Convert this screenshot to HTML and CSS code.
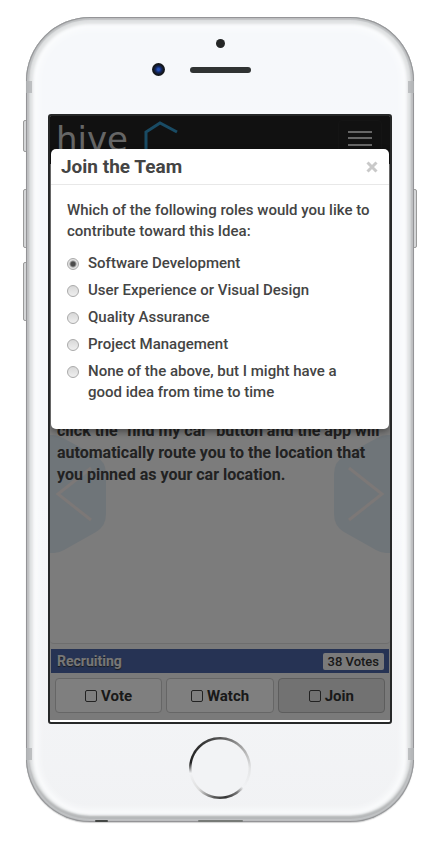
FILE: index.html
```
<!DOCTYPE html>
<html lang="en">
<head>
<meta charset="utf-8">
<meta name="viewport" content="width=device-width, initial-scale=1">
<title>Hive - Join the Team</title>
<link rel="stylesheet" href="styles.css">
</head>
<body>
<div class="phone">
  <span class="side-key mute"></span>
  <span class="side-key volume-up"></span>
  <span class="side-key volume-down"></span>
  <span class="side-key power"></span>
  <div class="shell">
    <span class="antenna top"></span>
    <span class="antenna bottom"></span>
    <span class="port jack"></span>
    <span class="port dock"></span>
    <div class="sensors">
      <span class="proximity"></span>
      <div class="speaker-row">
        <span class="camera"></span>
        <span class="speaker"></span>
      </div>
    </div>

    <div class="screen">
      <div class="page">
        <header class="navbar">
          <a class="brand" href="#"><span>hive</span>
            <svg class="brand-mark" width="36" height="38" viewBox="0 0 36 38" aria-hidden="true"><path d="M34 12 17 3 3 12v18l14 7" fill="none" stroke="#3296c8" stroke-width="3"/></svg>
          </a>
          <button class="menu" type="button" aria-label="Menu">
            <svg width="24" height="18" viewBox="0 0 24 18"><path d="M0 2h24M0 8h24M0 15h24" stroke="#ccc" stroke-width="2"/></svg>
          </button>
        </header>
        <main class="idea">
          <p>click the "find my car" button and the app will automatically route you to the location that you pinned as your car location.</p>
          <button class="arrow previous" type="button" aria-label="Previous">
            <svg width="56" height="118" viewBox="0 0 56 118"><path class="hex" d="M0 0h3q5 0 10 3l33 18q10 6 10 18v40q0 12-10 18l-32 18q-5 3-10 3H0z"/><path class="chevron" d="M41 33 8 59l33 26"/></svg>
          </button>
          <button class="arrow next" type="button" aria-label="Next">
            <svg width="56" height="118" viewBox="0 0 56 118"><path class="hex" d="M56 0h-3q-5 0-10 3L10 21Q0 27 0 39v40q0 12 10 18l32 18q5 3 10 3h4z"/><path class="chevron" d="M15 33l33 26-33 26"/></svg>
          </button>
        </main>
        <div class="status"><span>Recruiting</span><span class="votes">38 Votes</span></div>
        <div class="actions">
          <button type="button"><i class="box"></i>Vote</button>
          <button type="button"><i class="box"></i>Watch</button>
          <button type="button" class="active"><i class="box"></i>Join</button>
        </div>
      </div>
      <div class="backdrop"></div>
      <form class="modal" role="dialog" aria-labelledby="modal-title">
        <div class="modal-head">
          <h1 id="modal-title">Join the Team</h1>
          <button class="close" type="button" aria-label="Close"><svg width="12" height="12" viewBox="0 0 12 12"><path d="M1.500 1.500l9 9M10.500 1.500l-9 9" stroke="#c9c9c9" stroke-width="3"/></svg></button>
        </div>
        <fieldset>
          <legend>Which of the following roles would you like to contribute toward this Idea:</legend>
          <label><input type="radio" name="role" checked><span>Software Development</span></label>
          <label><input type="radio" name="role"><span>User Experience or Visual Design</span></label>
          <label><input type="radio" name="role"><span>Quality Assurance</span></label>
          <label><input type="radio" name="role"><span>Project Management</span></label>
          <label><input type="radio" name="role"><span>None of the above, but I might have a good idea from time to time</span></label>
        </fieldset>
      </form>
    </div>

    <button class="home" type="button" aria-label="Home"></button>
  </div>
</div>
</body>
</html>
```
FILE: styles.css
```
* { box-sizing: border-box; }
body {
  margin: 0;
  background: #fff;
  font-family: Roboto, "Liberation Sans", sans-serif;
  color: #444;
}
button { font: inherit; color: inherit; padding: 0; border: 0; background: none; }

.phone {
  position: relative;
  margin: 17px 12px 23px 26px;
}
.shell {
  position: relative;
  padding: 22px 22px 23px;
  border-radius: 64px;
  background: linear-gradient(#f6f8fb, #f6f8fa 60%, #f1f2f4);
  box-shadow:
    inset 0 0 1px 1px #8f9092,
    inset 0 0 1px 3px #c2c4c6,
    inset 0 -3px 2px 3px #b5b7b8,
    inset 0 0 3px 7px #dfe1e2,
    inset 0 0 6px 12px #fbfcfd,
    0 1px 1px #d0d0d0;
}

.side-key {
  position: absolute;
  left: -3px;
  width: 5px;
  height: 59px;
  border: 1px solid #9a9a9a;
  border-radius: 2px;
  background: #d5d6d8;
}
.mute { top: 103px; height: 32px; }
.volume-up { top: 172px; }
.volume-down { top: 245px; }
.power { top: 172px; left: auto; right: -3px; }

.antenna {
  position: absolute;
  left: 0;
  right: 0;
  height: 12px;
  border: solid #b4b6b8;
  border-width: 0 6px;
  opacity: .8;
}
.antenna.top { top: 64px; }
.antenna.bottom { bottom: 62px; }
.port { position: absolute; bottom: 0; height: 2px; background: #454846; border-radius: 2px; }
.jack { left: 69px; width: 13px; }
.dock { left: 50%; width: 45px; margin-left: -22px; background: #777a77; }

.sensors { display: grid; gap: 15px; padding-bottom: 38px; }
.proximity {
  justify-self: center;
  width: 9px;
  height: 9px;
  border-radius: 50%;
  background: #242626;
}
.speaker-row { display: grid; grid-template-columns: 1fr auto 1fr; column-gap: 25px; align-items: center; }
.camera {
  justify-self: end;
  width: 13px;
  height: 13px;
  border-radius: 50%;
  background: radial-gradient(#2450b8 0 1px, #14275f 3px, #14171c 5px);
}
.speaker { width: 61px; height: 6px; border-radius: 3px; background: #303333; }

.screen {
  position: relative;
  overflow: hidden;
  border: 2px solid #262828;
  border-radius: 3px;
  background: #fff;
}
.page { display: flex; flex-direction: column; background: #f4f4f4; border-bottom: 1px solid #fff; margin-bottom: 1px; }
.navbar {
  display: flex;
  justify-content: space-between;
  align-items: start;
  height: 48px;
  padding: 4px 8px 0 6px;
  background: #222;
}
.brand {
  display: flex;
  align-items: start;
  gap: 15px;
  color: #ccc;
  text-decoration: none;
  font: 400 34px/38px "DejaVu Sans", sans-serif;
}
.menu { height: 36px; padding: 2px 9px 0; border: 1px solid #282828; border-radius: 4px; }
.menu svg { display: block; }

.idea {
  position: relative;
  min-height: 480px;
  padding: 256px 7px 0;
  background: #f8f8f8;
  border: solid #ddd;
  border-width: 0 0 1px;
  border-radius: 0 0 4px 4px;
}
.idea p { position: relative; z-index: 1; margin: 0; font-size: 16px; line-height: 22px; font-weight: 700; color: #444; }
.arrow { position: absolute; top: 271px; }
.arrow svg { display: block; }
.previous { left: 0; }
.next { right: 0; }
.hex { fill: #dfeaf2; }
.chevron { fill: none; stroke: #f8f0ee; stroke-width: 3; }

.status {
  display: flex;
  justify-content: space-between;
  align-items: center;
  height: 24px;
  margin: 5px 1px 0;
  padding: 0 5px 0 6px;
  background: #4c67a8;
  color: #eee;
  font-size: 14px;
  font-weight: 700;
  text-shadow: 0 1px 1px #333;
}
.votes { padding: 0 5px; border-radius: 2px; background: #f4f4f4; color: #333; font-size: 13px; line-height: 17px; font-weight: 500; text-shadow: none; }
.actions { display: grid; grid-template-columns: repeat(3, 1fr); gap: 4px; padding: 5px; padding-bottom: 7px; }
.actions button {
  display: flex;
  align-items: center;
  justify-content: center;
  gap: 4px;
  height: 35px;
  border: 1px solid #ccc;
  border-radius: 4px;
  background: #fff;
  color: #333;
  font-size: 15px;
  font-weight: 700;
}
.actions .active { background: #e4e4e4; border-color: #bbb; }
.box { width: 12px; height: 12px; border: 1px solid #444; border-radius: 2px; }

.backdrop { position: absolute; inset: 0 0 2px; z-index: 2; background: rgba(0, 0, 0, .5); }
.modal {
  position: absolute;
  z-index: 3;
  top: 33px;
  left: 1px;
  right: 1px;
  border-radius: 5px;
  background: #fff;
  box-shadow: 0 3px 7px rgba(0, 0, 0, .4);
}
.modal-head {
  display: flex;
  justify-content: space-between;
  align-items: center;
  height: 36px;
  padding: 0 11px 0 10px;
  border-bottom: 1px solid #e8e8e8;
}
h1 { margin: 0; font-size: 19px; font-weight: 700; }
.close { width: 12px; height: 12px; }
.close svg { display: block; }
fieldset { display: grid; gap: 6px; margin: 0; padding: 15px 18px 26px 16px; border: 0; font-size: 15px; line-height: 21px; font-weight: 500; }
legend { float: left; padding: 0; margin-bottom: 5px; }
label { display: flex; align-items: start; gap: 9px; }
input {
  flex: none;
  appearance: none;
  width: 12px;
  height: 12px;
  margin: 5px 0 0;
  border: 1px solid #aaa;
  border-radius: 50%;
  background: linear-gradient(#d8d8d8, #efefef);
}
input:checked { background: radial-gradient(#4c4c4c 0 2px, #e2e2e2 4px); }

.home {
  display: block;
  width: 62px;
  height: 62px;
  margin: 13px auto 0;
  border-radius: 50%;
  background:
    radial-gradient(#f2f3f5 0 28px, transparent 29px),
    conic-gradient(#555 0deg, #aaa 50deg, #e4e5e6 90deg, #f2f3f5 130deg, #777 145deg, #333 170deg, #555 190deg, #ddd 225deg, #f2f3f5 260deg, #222 280deg, #333 320deg, #555 360deg);
}
```
